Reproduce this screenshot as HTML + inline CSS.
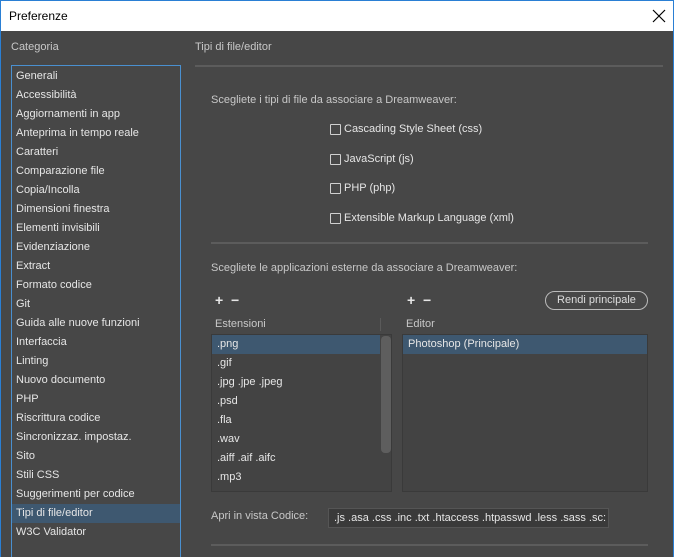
<!DOCTYPE html>
<html><head><meta charset="utf-8"><style>
*{margin:0;padding:0;box-sizing:border-box}
html,body{width:674px;height:557px;overflow:hidden}
body{background:#474747;font-family:"Liberation Sans",sans-serif;font-size:11px;color:#e6e6e6;position:relative}
.abs{position:absolute;white-space:nowrap}
#title{left:0;top:0;width:674px;height:31px;background:#fff;color:#000;font-size:12px;border:1px solid #2a7fd4;border-bottom:none}
#win{left:0;top:31px;width:674px;height:526px;border-left:1px solid #2a7fd4;border-right:1px solid #2a7fd4}
.g{color:#c8c8c8}
#list{left:11px;top:65px;width:170px;height:500px;border:1px solid #4a90d0;background:#474747;padding-top:1px}
#list div{height:19px;line-height:19px;padding-left:4px}
.sel{background:#3e5870}
.sep{background:#5c5c5c;height:2px}
.cb{width:11px;height:11px;border:1px solid #d0d0d0;border-radius:1px}
.box{background:#434343;border:1px solid #3a3a3a}
.row{height:19px;line-height:19px;padding-left:5px}
</style></head><body>
<div id="title" class="abs"><span class="abs" style="left:8px;top:8px">Preferenze</span>
<svg class="abs" style="left:651px;top:8px" width="14" height="14"><path d="M1 1L13 13M13 1L1 13" stroke="#000" stroke-width="1.2"/></svg></div>
<div id="win" class="abs"></div>
<span class="abs g" style="left:11px;top:41px">Categoria</span>
<span class="abs g" style="left:195px;top:41px">Tipi di file/editor</span>
<div id="list" class="abs">
<div>Generali</div><div>Accessibilità</div><div>Aggiornamenti in app</div><div>Anteprima in tempo reale</div><div>Caratteri</div><div>Comparazione file</div><div>Copia/Incolla</div><div>Dimensioni finestra</div><div>Elementi invisibili</div><div>Evidenziazione</div><div>Extract</div><div>Formato codice</div><div>Git</div><div>Guida alle nuove funzioni</div><div>Interfaccia</div><div>Linting</div><div>Nuovo documento</div><div>PHP</div><div>Riscrittura codice</div><div>Sincronizzaz. impostaz.</div><div>Sito</div><div>Stili CSS</div><div>Suggerimenti per codice</div><div class="sel">Tipi di file/editor</div><div>W3C Validator</div>
</div>
<div class="abs sep" style="left:195px;top:65px;width:468px"></div>
<span class="abs g" style="left:211px;top:94px">Scegliete i tipi di file da associare a Dreamweaver:</span>
<div class="abs cb" style="left:330px;top:124px"></div><span class="abs" style="left:344px;top:123px">Cascading Style Sheet (css)</span>
<div class="abs cb" style="left:330px;top:154px"></div><span class="abs" style="left:344px;top:153px">JavaScript (js)</span>
<div class="abs cb" style="left:330px;top:183px"></div><span class="abs" style="left:344px;top:182px">PHP (php)</span>
<div class="abs cb" style="left:330px;top:213px"></div><span class="abs" style="left:344px;top:212px">Extensible Markup Language (xml)</span>
<div class="abs sep" style="left:211px;top:242px;width:437px"></div>
<span class="abs g" style="left:211px;top:262px">Scegliete le applicazioni esterne da associare a Dreamweaver:</span>
<span class="abs" style="left:215px;top:292px;font-size:14px;font-weight:bold">+&nbsp; −</span>
<span class="abs" style="left:407px;top:292px;font-size:14px;font-weight:bold">+&nbsp; −</span>
<div class="abs" style="left:545px;top:291px;width:103px;height:19px;border:1px solid #bbb;border-radius:10px;text-align:center;line-height:17px;color:#ddd">Rendi principale</div>
<span class="abs g" style="left:215px;top:318px">Estensioni</span>
<div class="abs" style="left:380px;top:318px;width:1px;height:13px;background:#5a5a5a"></div>
<span class="abs g" style="left:406px;top:318px">Editor</span>
<div class="abs box" style="left:211px;top:334px;width:181px;height:158px">
<div class="row sel" style="width:168px">.png</div><div class="row">.gif</div><div class="row">.jpg .jpe .jpeg</div><div class="row">.psd</div><div class="row">.fla</div><div class="row">.wav</div><div class="row">.aiff .aif .aifc</div><div class="row">.mp3</div>
<div class="abs" style="left:169px;top:1px;width:10px;height:117px;background:#5e5e5e;border-radius:4px"></div>
</div>
<div class="abs box" style="left:402px;top:334px;width:246px;height:158px">
<div class="row sel">Photoshop (Principale)</div></div>
<span class="abs g" style="left:211px;top:510px">Apri in vista Codice:</span>
<div class="abs" style="left:328px;top:508px;width:281px;height:20px;background:#3a3a3a;border:1px solid #555;line-height:18px;padding-left:5px;overflow:hidden">.js .asa .css .inc .txt .htaccess .htpasswd .less .sass .sc:</div>
<div class="abs sep" style="left:211px;top:544px;width:437px"></div>
</body></html>
